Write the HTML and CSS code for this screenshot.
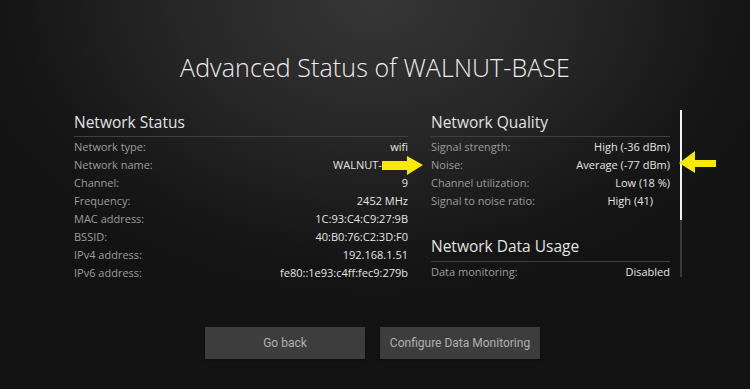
FILE: index.html
```html
<!DOCTYPE html>
<html lang="en">
<head>
    <meta charset="UTF-8">
    <title>Advanced Status</title>
    <link rel="stylesheet" href="styles.css">
</head>
<body>

<section class="status-page">
    <h1 class="title">Advanced Status of WALNUT-BASE</h1>

    <div class="panels">
        <div class="panel panel-left">
            <h2 class="panel-head">Network Status</h2>
            <ul class="rows">
                <li class="row"><span class="lbl">Network type:</span><span class="val">wifi</span></li>
                <li class="row"><span class="lbl">Network name:</span><span class="val">WALNUT-BASE</span></li>
                <li class="row"><span class="lbl">Channel:</span><span class="val">9</span></li>
                <li class="row"><span class="lbl">Frequency:</span><span class="val">2452 MHz</span></li>
                <li class="row"><span class="lbl">MAC address:</span><span class="val">1C:93:C4:C9:27:9B</span></li>
                <li class="row"><span class="lbl">BSSID:</span><span class="val">40:B0:76:C2:3D:F0</span></li>
                <li class="row"><span class="lbl">IPv4 address:</span><span class="val">192.168.1.51</span></li>
                <li class="row"><span class="lbl">IPv6 address:</span><span class="val">fe80::1e93:c4ff:fec9:279b</span></li>
            </ul>
            <!-- arrow pasted over the network name -->
            <svg class="arrow arrow-right" width="42" height="20" viewBox="0 0 42 20">
                <polygon points="0,5 25,5 25,0 41,9 25,19 25,14 0,14" fill="#f7ea00"/>
            </svg>
        </div>

        <div class="panel panel-right">
            <h2 class="panel-head">Network Quality</h2>
            <ul class="rows">
                <li class="row"><span class="lbl">Signal strength:</span><span class="val">High (-36 dBm)</span></li>
                <li class="row"><span class="lbl">Noise:</span><span class="val">Average (-77 dBm)</span></li>
                <li class="row"><span class="lbl">Channel utilization:</span><span class="val">Low (18 %)</span></li>
                <li class="row"><span class="lbl">Signal to noise ratio:</span><span class="val val-short">High (41)</span></li>
            </ul>

            <h2 class="panel-head panel-head-gap">Network Data Usage</h2>
            <ul class="rows">
                <li class="row"><span class="lbl">Data monitoring:</span><span class="val">Disabled</span></li>
            </ul>
        </div>

        <div class="scroll">
            <div class="scroll-thumb"></div>
        </div>

        <svg class="arrow arrow-left" width="38" height="22" viewBox="0 0 38 22">
            <polygon points="0,12 16,0 16,9 37,9 37,16 16,16 16,22" fill="#f7ea00"/>
        </svg>
    </div>

    <div class="btns">
        <button type="button" class="btn">Go back</button>
        <button type="button" class="btn">Configure Data Monitoring</button>
    </div>
</section>

</body>
</html>
```

FILE: styles.css
```css
html,body{ margin: 0; padding: 0;}
body{ width: 750px; height: 389px; overflow: hidden; background: #131313; font-family: "Open Sans", "Noto Sans", sans-serif;}
ul,li{ list-style: none; padding: 0; margin: 0;}

.status-page{ height: 389px; box-sizing: border-box; padding-top: 52px; background: radial-gradient(ellipse 420px 300px at 50% 0%, #363636 0%, #272727 45%, #161616 85%, #131313 100%);}

.title{ margin: 0; text-align: center; font-size: 25px; font-weight: 300; line-height: 30px; color: #ececec; letter-spacing: 0.1px;}

.panels{ position: relative; display: flex; margin: 30px 0 0 74px;}
.panel{ position: relative;}
.panel-left{ width: 334px;}
.panel-right{ width: 239px; margin-left: 23px;}

.panel-head{ margin: 0; padding-bottom: 4px; border-bottom: 1px solid #3e3e3e; font-size: 15.5px; font-weight: 400; line-height: 20px; color: #e2e2e2;}
.panel-head-gap{ margin-top: 26px; padding-bottom: 5px;}

.rows{ padding-top: 1px;}
.row{ display: flex; justify-content: space-between; height: 18px; line-height: 18px; font-size: 11px;}
.lbl{ color: #9c9c9c;}
.val{ color: #e4e4e4; font-weight: 500;}
.val-short{ padding-right: 17px;}

.scroll{ width: 2px; margin: -2px 0 0 10px; height: 167px; background: #3a3a3a;}
.scroll-thumb{ height: 110px; background: #f2f2f2;}

.arrow{ position: absolute; display: block;}
.arrow-right{ left: 308px; top: 44px;}
.arrow-left{ left: 605px; top: 39px;}

.btns{ display: flex; justify-content: center; gap: 15px; margin-top: 45px; padding-right: 5px;}
.btn{ width: 160px; height: 32px; border: 0; background: #3d3d3d; color: #b0b0b0; font-family: Roboto, sans-serif; font-size: 12px; box-shadow: 0 1px 2px rgba(0,0,0,0.5);}
```
